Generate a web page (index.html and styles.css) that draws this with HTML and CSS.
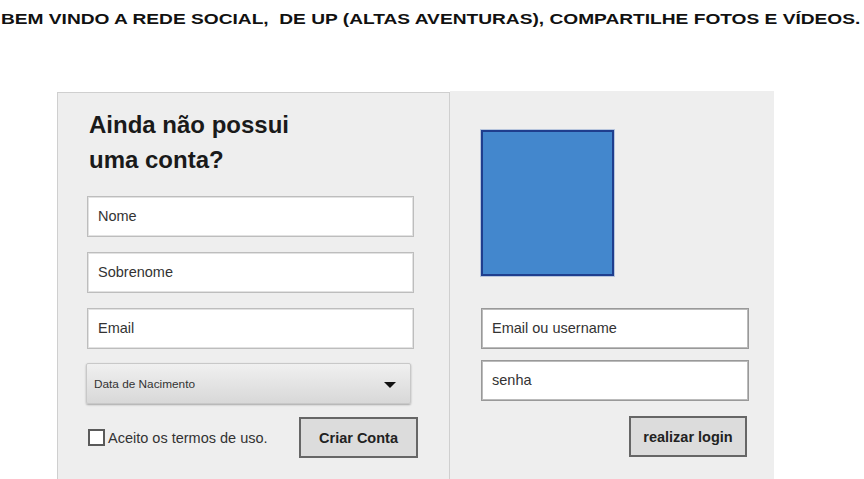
FILE: index.html
```html
<!DOCTYPE html>
<html lang="pt">
<head>
<meta charset="utf-8">
<title>UP - Altas Aventuras</title>
<link rel="stylesheet" href="styles.css">
</head>
<body>
<header class="top">
  <h1 class="welcome">BEM VINDO A REDE SOCIAL,&nbsp; DE UP (ALTAS AVENTURAS), COMPARTILHE FOTOS E VÍDEOS.</h1>
</header>
<main class="wrap">
  <section class="signup">
    <h2 class="signup-title">Ainda não possui<br>uma conta?</h2>
    <div class="field">Nome</div>
    <div class="field">Sobrenome</div>
    <div class="field">Email</div>
    <div class="select">
      <span>Data de Nacimento</span>
      <span class="caret"></span>
    </div>
    <div class="signup-foot">
      <label class="terms"><span class="box"></span>Aceito os termos de uso.</label>
      <button class="btn btn-create">Criar Conta</button>
    </div>
  </section>
  <section class="login">
    <div class="logo"></div>
    <div class="field dark">Email ou username</div>
    <div class="field dark">senha</div>
    <div class="login-foot">
      <button class="btn btn-login">realizar login</button>
    </div>
  </section>
</main>
</body>
</html>
```
FILE: styles.css
```css
* { box-sizing: border-box; }
html, body { margin: 0; padding: 0; background: #fff; }
body {
  font-family: "Liberation Sans", Arial, sans-serif;
  color: #333;
  width: 864px;
  height: 479px;
  overflow: hidden;
}
.top { padding: 10px 0 0 1px; height: 91px; }
.welcome {
  margin: 0;
  font-size: 15.5px;
  font-weight: bold;
  color: #111;
  white-space: nowrap;
  transform: scaleX(1.235);
  transform-origin: left center;
  display: inline-block;
}
.wrap {
  display: flex;
  margin-left: 57px;
  align-items: flex-start;
}
.signup {
  width: 393px;
  height: 388px;
  margin-top: 1px;
  background: #eeeeee;
  border: 1px solid #cfcfcf;
  padding: 14px 0 0 29px;
  display: flex;
  flex-direction: column;
}
.signup-title {
  margin: 0 0 19px 2px;
  font-size: 24px;
  line-height: 35px;
  font-weight: bold;
  color: #1a1a1a;
}
.field {
  width: 327px;
  height: 41px;
  background: #fff;
  border: 1px solid #bdbdbd;
  box-shadow: inset 0 0 0 1px #e2e2e2;
  font-size: 14.5px;
  line-height: 39px;
  padding-left: 10px;
  color: #333;
  margin-bottom: 15px;
}
.signup .field:nth-of-type(3) { margin-bottom: 14px; }
.select {
  width: 325px;
  height: 41px;
  margin-left: -1px;
  border: 1px solid #c8c8c8;
  border-radius: 2px;
  background: linear-gradient(#f0f0f0, #d8d8d8);
  box-shadow: 0 1px 2px rgba(0,0,0,0.3);
  display: flex;
  align-items: center;
  justify-content: space-between;
  padding: 0 14px 0 7px;
  font-size: 11.8px;
  color: #333;
}
.caret {
  width: 0; height: 0;
  border-left: 6px solid transparent;
  border-right: 6px solid transparent;
  border-top: 6px solid #111;
  margin-top: 3px;
}
.signup-foot {
  display: flex;
  align-items: center;
  justify-content: space-between;
  width: 331px;
  margin-top: 13px;
}
.terms {
  display: flex;
  align-items: center;
  font-size: 14.5px;
  color: #333;
}
.box {
  width: 17px; height: 17px;
  border: 2px solid #5a5a5a;
  background: #fff;
  margin-right: 3px;
  margin-left: 1px;
}
.btn {
  height: 41px;
  background: #dcdcdc;
  border: 2px solid #666;
  font-family: "Liberation Sans", Arial, sans-serif;
  font-weight: bold;
  font-size: 14.5px;
  color: #222;
  padding: 0;
}
.btn-create { width: 119px; }
.login {
  width: 324px;
  height: 388px;
  background: #eeeeee;
  padding: 39px 0 0 31px;
  display: flex;
  flex-direction: column;
}
.logo {
  width: 133px;
  height: 146px;
  background: #4387cd;
  border: 2px solid #1f3e8e;
  outline: 1px solid #b7c5dd;
  margin-bottom: 32px;
}
.field.dark {
  width: 268px;
  border: 1px solid #999;
  box-shadow: inset 0 0 0 1px #bbb;
  margin-bottom: 11px;
}
.login-foot {
  display: flex;
  justify-content: flex-end;
  width: 266px;
  margin-top: 4px;
}
.btn-login { width: 118px; }
```
